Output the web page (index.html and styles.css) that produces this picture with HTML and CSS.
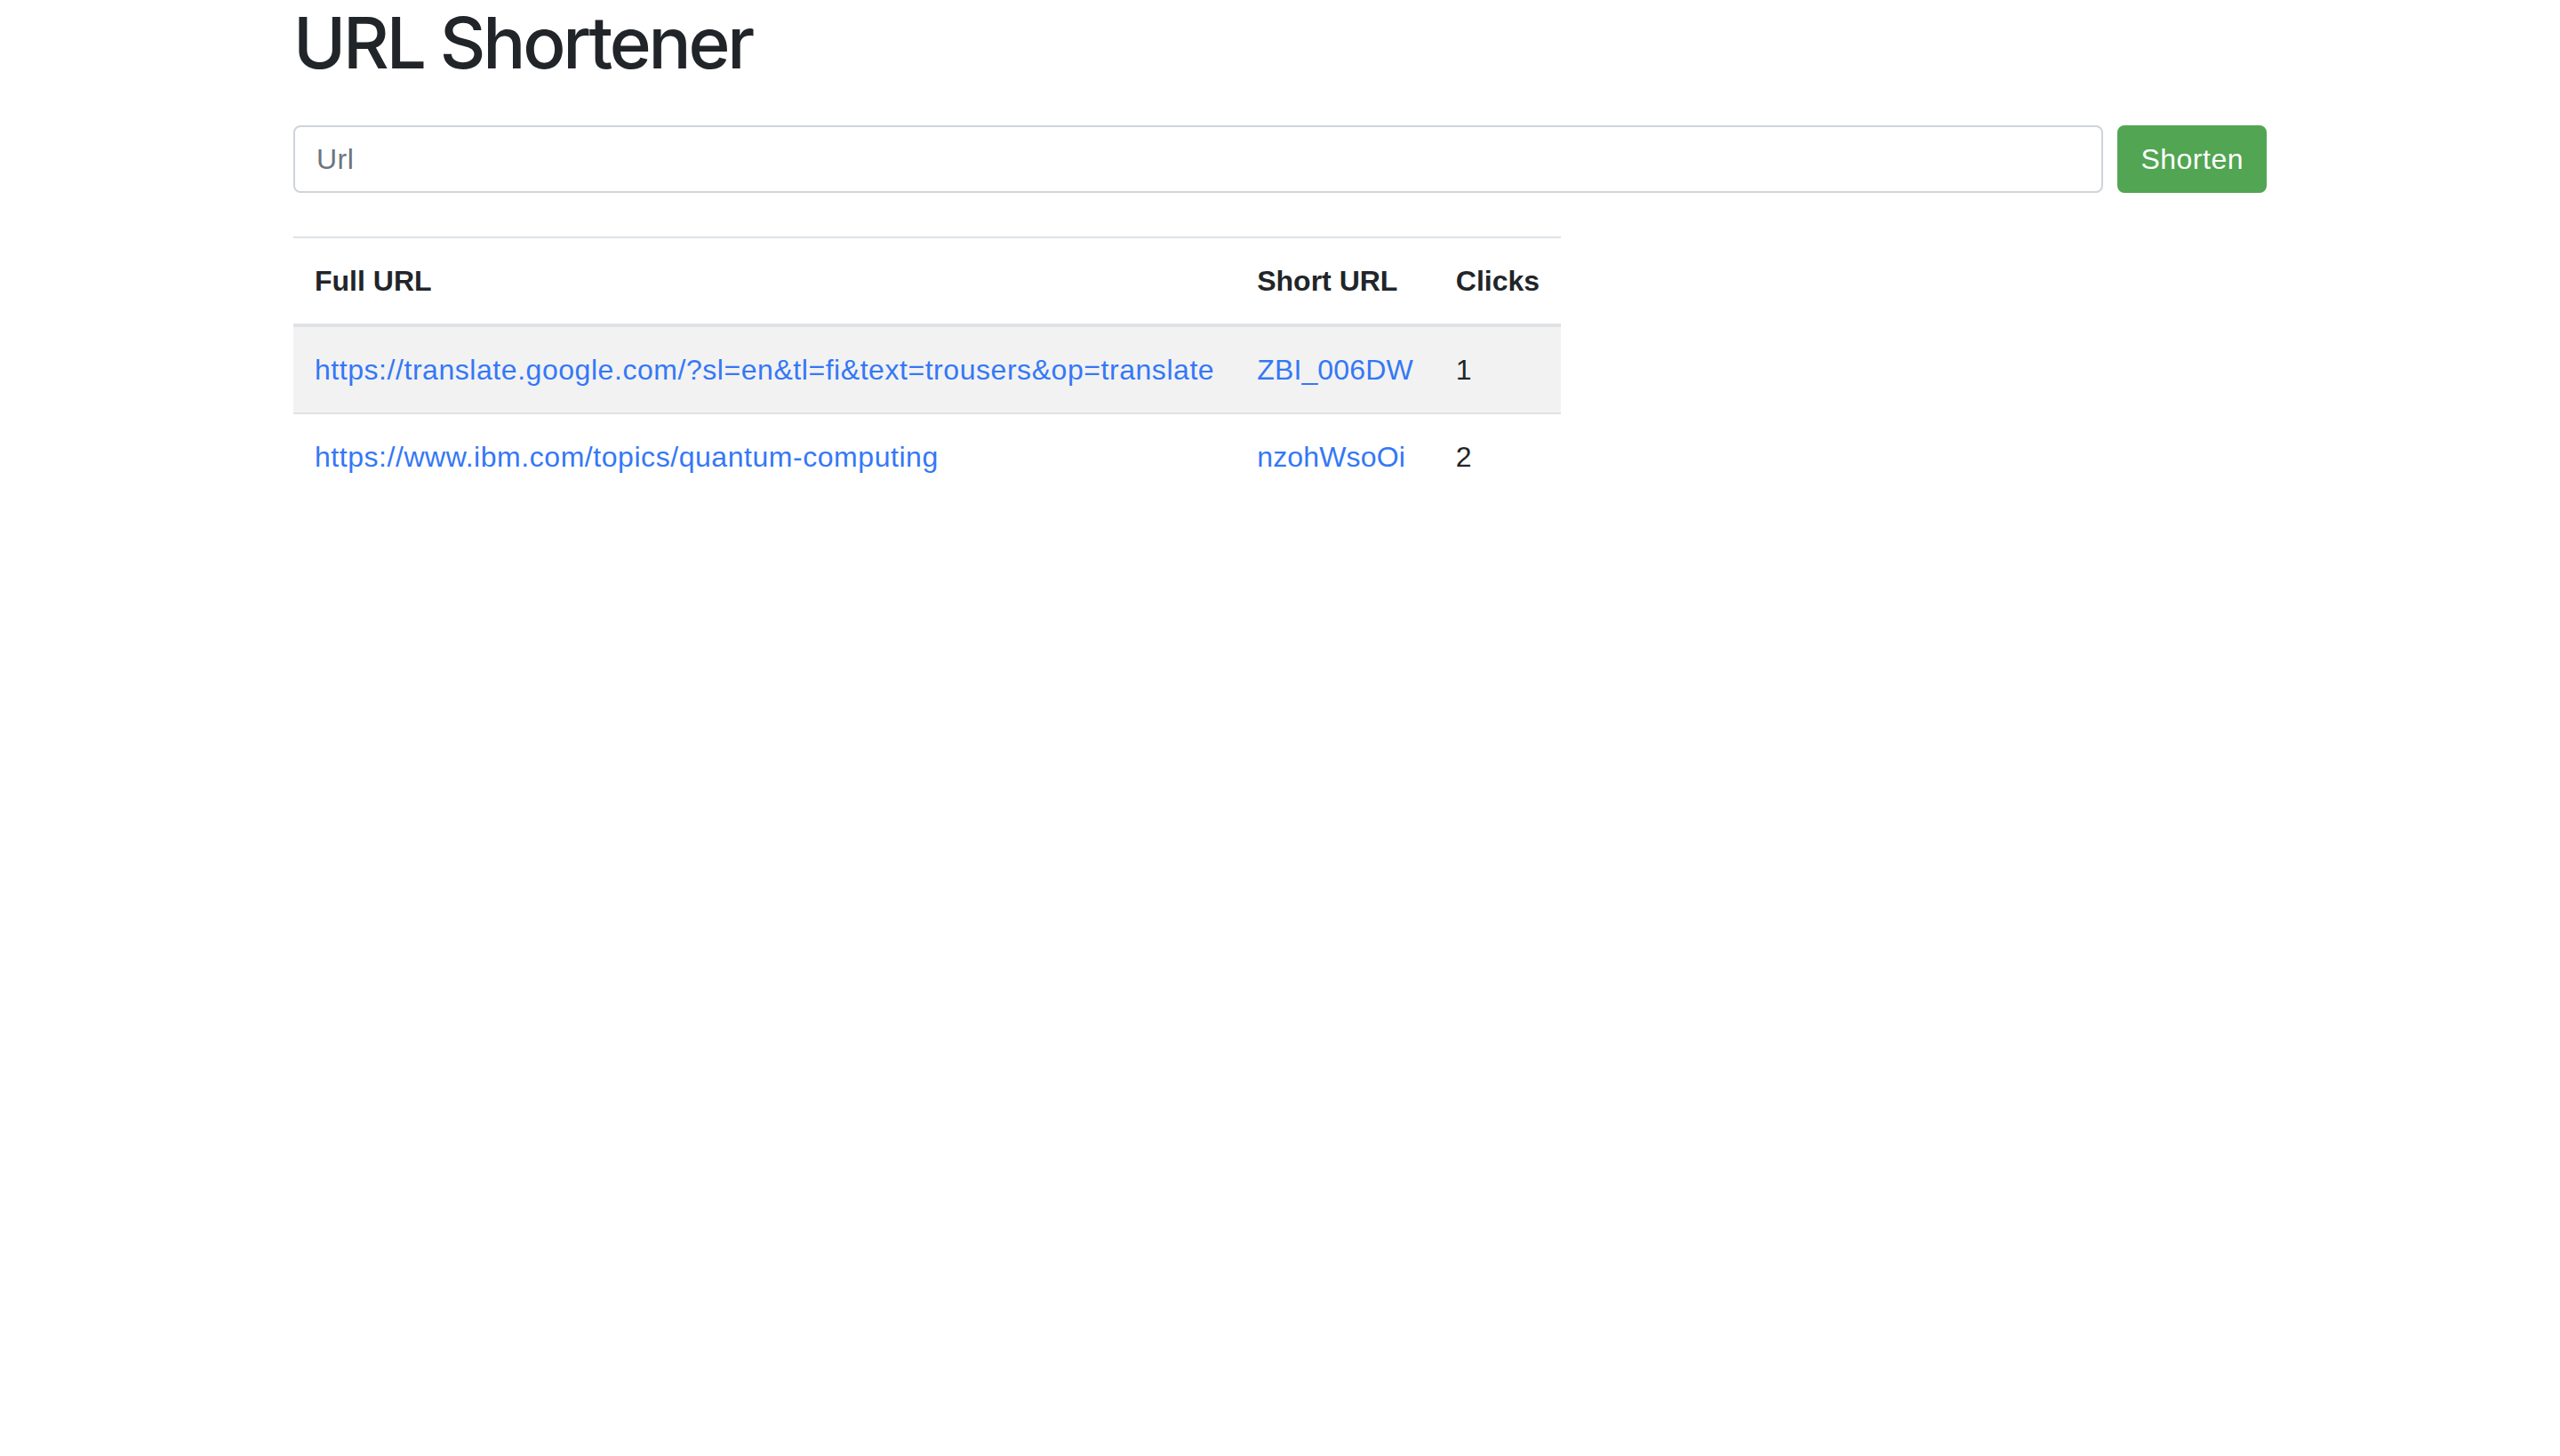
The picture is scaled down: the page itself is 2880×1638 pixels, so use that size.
FILE: index.html
```html
<!DOCTYPE html>
<html lang="en">
<head>
<meta charset="utf-8">
<title>URL Shortener</title>
<link rel="stylesheet" href="styles.css">
</head>
<body>
<div class="container">
  <h1 class="title">URL Shortener</h1>
  <form class="shorten-form">
    <input class="url-input" type="url" placeholder="Url">
    <button class="btn-shorten" type="button">Shorten</button>
  </form>
  <table class="url-table">
    <thead>
      <tr>
        <th>Full URL</th>
        <th>Short URL</th>
        <th>Clicks</th>
      </tr>
    </thead>
    <tbody>
      <tr class="striped">
        <td class="col-full"><a href="#">https://translate.google.com/?sl=en&amp;tl=fi&amp;text=trousers&amp;op=translate</a></td>
        <td><a href="#">ZBI_006DW</a></td>
        <td>1</td>
      </tr>
      <tr>
        <td class="col-full"><a href="#">https://www.ibm.com/topics/quantum-computing</a></td>
        <td><a href="#">nzohWsoOi</a></td>
        <td>2</td>
      </tr>
    </tbody>
  </table>
</div>
</body>
</html>
```
FILE: styles.css
```css
html, body {
  margin: 0;
  padding: 0;
  background: #ffffff;
}

body {
  font-family: "Liberation Sans", Arial, sans-serif;
  font-size: 32px;
  line-height: 1.5;
  color: #212529;
}

.container {
  max-width: 2280px;
  margin: 0 auto;
  padding: 0 30px;
  box-sizing: border-box;
}

.title {
  margin: 0 0 45px;
  font-family: Inter, "Liberation Sans", sans-serif;
  font-size: 80px;
  font-weight: 500;
  line-height: 1.2;
  letter-spacing: -3.2px;
}

.shorten-form {
  display: flex;
  gap: 16px;
  margin: 0 0 49px;
}

.url-input {
  flex: 1;
  height: 76px;
  box-sizing: border-box;
  padding: 12px 24px;
  font: inherit;
  letter-spacing: 0.5px;
  color: #495057;
  border: 2px solid #ced4da;
  border-radius: 8px;
  background: #fff;
  outline: none;
}

.url-input::placeholder {
  color: #6c757d;
  opacity: 1;
}

.btn-shorten {
  height: 76px;
  box-sizing: border-box;
  padding: 12px 24px;
  font: inherit;
  letter-spacing: 0.5px;
  color: #ffffff;
  background: #52a552;
  border: 2px solid #52a552;
  border-radius: 8px;
}

.url-table {
  border-collapse: collapse;
  color: #212529;
}

.url-table th,
.url-table td {
  padding: 24px;
  text-align: left;
  white-space: nowrap;
  border-top: 2px solid #dee2e6;
  vertical-align: top;
}

.url-table td {
  letter-spacing: 0.15px;
}

.url-table td.col-full {
  letter-spacing: 0.55px;
}

.url-table th {
  font-weight: 700;
  vertical-align: bottom;
  border-bottom: 4px solid #dee2e6;
}

.url-table tbody tr:first-child td {
  border-top: none;
}

.url-table .striped {
  background: #f2f2f2;
}

.url-table a {
  color: #3478f6;
  text-decoration: none;
}
```
